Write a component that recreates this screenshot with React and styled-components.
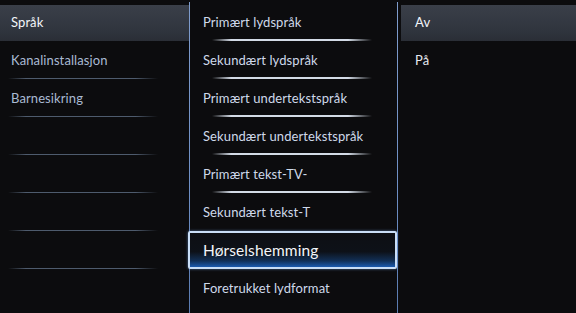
import React from "react";
import styled, { createGlobalStyle } from "styled-components";

const GlobalStyle = createGlobalStyle`
  html, body {
    margin: 0;
    padding: 0;
    background: #0b0b0d;
  }
  body {
    font-family: Lato, "Open Sans", "Liberation Sans", sans-serif;
  }
`;

const Screen = styled.div`
  display: flex;
  width: 576px;
  height: 313px;
  overflow: hidden;
  background: #0c0c0e;
`;

const Column = styled.div`
  display: flex;
  flex-direction: column;
  width: ${(p) => p.width || "auto"};
  flex: ${(p) => (p.width ? "none" : "1")};
  padding-top: 3px;
  box-sizing: border-box;
`;

const Divider = styled.div`
  width: 1px;
  flex: none;
  margin-top: 2px;
  background: linear-gradient(180deg, #7f9ccc 0%, #6e8fc4 60%, #5a7bb0 100%);
`;

const Row = styled.div`
  position: relative;
  display: flex;
  align-items: center;
  height: 38px;
  flex: none;
  box-sizing: border-box;
  padding-left: ${(p) => p.indent}px;
  font-size: 13px;
  color: ${(p) => p.color};
  letter-spacing: 0.1px;
`;

const Highlight = styled.div`
  position: absolute;
  left: ${(p) => p.left || 0}px;
  right: 0;
  top: 2px;
  bottom: 0;
  background: linear-gradient(180deg, #3a3f49 0%, #30353e 70%, #2a2e36 100%);
`;

const Label = styled.span`
  position: relative;
  font-size: ${(p) => (p.big ? "15.5px" : "inherit")};
  color: ${(p) => (p.bright ? "#f2f5fa" : "inherit")};
`;

const Separator = styled.div`
  position: absolute;
  bottom: 0;
  left: ${(p) => p.from}px;
  width: ${(p) => p.len}px;
  height: ${(p) => (p.strong ? 2 : 1)}px;
  background: linear-gradient(
    90deg,
    transparent 0%,
    ${(p) => p.tint} 12%,
    ${(p) => p.tint} 85%,
    transparent 100%
  );
`;

const SelectedBox = styled.div`
  position: absolute;
  left: -2px;
  right: 0;
  top: 0;
  bottom: 0;
  border: 2px solid #c9def7;
  border-radius: 2px;
  background: linear-gradient(
    180deg,
    #0d0f14 0%,
    #0d1118 55%,
    #123057 82%,
    #1c5bb0 100%
  );
  box-shadow: 0 0 3px rgba(120, 170, 240, 0.6);
`;

const leftItems = ["Språk", "Kanalinstallasjon", "Barnesikring", "", "", "", "", ""];
const midItems = [
  "Primært lydspråk",
  "Sekundært lydspråk",
  "Primært undertekstspråk",
  "Sekundært undertekstspråk",
  "Primært tekst-TV-",
  "Sekundært tekst-T",
  "Hørselshemming",
  "Foretrukket lydformat",
];
const rightItems = ["Av", "På"];

export default function App() {
  return (
    <>
      <GlobalStyle />
      <Screen>
        <Column width="189px">
          {leftItems.map((t, i) => (
            <Row key={i} indent={11} color="#a9bad3">
              {i === 0 && <Highlight />}
              <Label bright={i === 0}>{t}</Label>
              {i > 0 && i < 7 && (
                <Separator from={8} len={150} tint="#4e5b6d" />
              )}
            </Row>
          ))}
        </Column>
        <Divider />
        <Column width="207px">
          {midItems.map((t, i) => (
            <Row key={i} indent={13} color="#cfd9ea">
              {i === 6 && <SelectedBox />}
              <Label big={i === 6} bright={i === 6}>
                {t}
              </Label>
              {i < 5 && (
                <Separator from={22} len={160} tint="#d3dbe6" strong />
              )}
            </Row>
          ))}
        </Column>
        <Divider />
        <Column>
          {rightItems.map((t, i) => (
            <Row key={i} indent={17} color="#e6eaf0">
              {i === 0 && <Highlight left={3} />}
              <Label bright={i === 0}>{t}</Label>
            </Row>
          ))}
        </Column>
      </Screen>
    </>
  );
}
